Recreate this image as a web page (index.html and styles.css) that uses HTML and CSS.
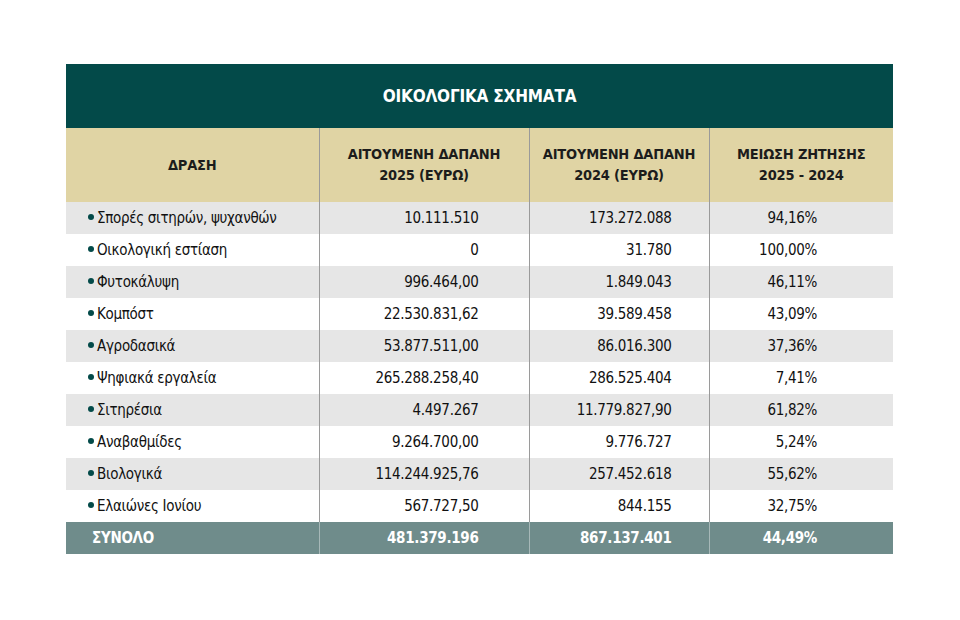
FILE: index.html
```html
<!DOCTYPE html>
<html lang="el">
<head>
    <meta charset="UTF-8">
    <title>Οικολογικά Σχήματα</title>
    <link rel="stylesheet" href="styles.css">
</head>
<body>
    <table class="eco-table">
        <colgroup>
            <col class="col-name">
            <col class="col-2025">
            <col class="col-2024">
            <col class="col-diff">
        </colgroup>
        <thead>
            <tr>
                <th colspan="4" class="title">ΟΙΚΟΛΟΓΙΚΑ ΣΧΗΜΑΤΑ</th>
            </tr>
            <tr class="head-row">
                <th>ΔΡΑΣΗ</th>
                <th>ΑΙΤΟΥΜΕΝΗ ΔΑΠΑΝΗ<br>2025 (ΕΥΡΩ)</th>
                <th>ΑΙΤΟΥΜΕΝΗ ΔΑΠΑΝΗ<br>2024 (ΕΥΡΩ)</th>
                <th>ΜΕΙΩΣΗ ΖΗΤΗΣΗΣ<br>2025 - 2024</th>
            </tr>
        </thead>
        <tbody>
            <tr><td class="name">Σπορές σιτηρών, ψυχανθών</td><td class="num c2">10.111.510</td><td class="num c3">173.272.088</td><td class="num c4">94,16%</td></tr>
            <tr><td class="name">Οικολογική εστίαση</td><td class="num c2">0</td><td class="num c3">31.780</td><td class="num c4">100,00%</td></tr>
            <tr><td class="name">Φυτοκάλυψη</td><td class="num c2">996.464,00</td><td class="num c3">1.849.043</td><td class="num c4">46,11%</td></tr>
            <tr><td class="name">Κομπόστ</td><td class="num c2">22.530.831,62</td><td class="num c3">39.589.458</td><td class="num c4">43,09%</td></tr>
            <tr><td class="name">Αγροδασικά</td><td class="num c2">53.877.511,00</td><td class="num c3">86.016.300</td><td class="num c4">37,36%</td></tr>
            <tr><td class="name">Ψηφιακά εργαλεία</td><td class="num c2">265.288.258,40</td><td class="num c3">286.525.404</td><td class="num c4">7,41%</td></tr>
            <tr><td class="name">Σιτηρέσια</td><td class="num c2">4.497.267</td><td class="num c3">11.779.827,90</td><td class="num c4">61,82%</td></tr>
            <tr><td class="name">Αναβαθμίδες</td><td class="num c2">9.264.700,00</td><td class="num c3">9.776.727</td><td class="num c4">5,24%</td></tr>
            <tr><td class="name">Βιολογικά</td><td class="num c2">114.244.925,76</td><td class="num c3">257.452.618</td><td class="num c4">55,62%</td></tr>
            <tr><td class="name">Ελαιώνες Ιονίου</td><td class="num c2">567.727,50</td><td class="num c3">844.155</td><td class="num c4">32,75%</td></tr>
        </tbody>
        <tfoot>
            <tr class="total">
                <td class="total-label">ΣΥΝΟΛΟ</td>
                <td class="num c2">481.379.196</td>
                <td class="num c3">867.137.401</td>
                <td class="num c4">44,49%</td>
            </tr>
        </tfoot>
    </table>
</body>
</html>
```

FILE: styles.css
```css
* {
    margin: 0;
    padding: 0;
    box-sizing: border-box;
}

body {
    font-family: "DejaVu Sans Condensed", "Liberation Sans", sans-serif;
    background: white;
    padding: 64px 67px 0 66px;
    color: #111;
}

.eco-table {
    width: 827px;
    border-collapse: collapse;
    table-layout: fixed;
}

.col-name { width: 253px; }
.col-2025 { width: 210px; }
.col-2024 { width: 180px; }
.col-diff { width: 184px; }

.title {
    background: #034a49;
    color: white;
    height: 64px;
    font-size: 17px;
    font-weight: bold;
    text-align: center;
    vertical-align: middle;
    letter-spacing: -0.2px;
}

.head-row th {
    background: #e0d4a4;
    height: 74px;
    font-size: 14.5px;
    font-weight: bold;
    line-height: 21px;
    text-align: center;
    vertical-align: middle;
    color: #1c1c1c;
    letter-spacing: -0.2px;
}

.head-row th + th,
tbody td + td {
    border-left: 1px solid #9a9a9a;
}

tbody tr {
    height: 32px;
}

tbody tr:nth-child(odd) {
    background: #e6e6e6;
}

td {
    font-size: 15px;
    letter-spacing: -0.3px;
    vertical-align: middle;
    white-space: nowrap;
}

.name {
    padding-left: 22px;
}

.name::before {
    content: "";
    display: inline-block;
    width: 6px;
    height: 6px;
    border-radius: 50%;
    background: #034a49;
    margin-right: 3px;
    vertical-align: 3px;
}

.num {
    text-align: right;
}

.c2 { padding-right: 50px; }
.c3 { padding-right: 37px; }
.c4 { padding-right: 76px; }

.total {
    height: 32px;
    background: #6f8c8b;
    color: white;
}

.total td {
    font-weight: bold;
}

.total td + td {
    border-left: 1px solid #a7b8b8;
}

.total-label {
    padding-left: 26px;
}
```
